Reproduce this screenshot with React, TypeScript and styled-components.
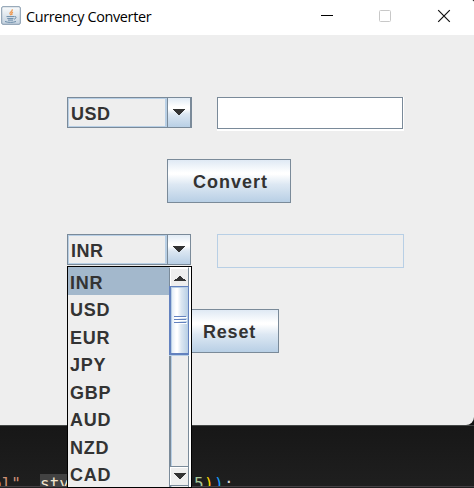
import React from 'react';
import styled, { createGlobalStyle } from 'styled-components';

const Global = createGlobalStyle`
  *, *::before, *::after { box-sizing: border-box; }
  body { margin: 0; background: #1a1a1a; overflow: hidden; }
`;

const Desktop = styled.div`
  width: 474px;
  height: 488px;
  position: relative;
  overflow: hidden;
  display: flex;
  flex-direction: column;
  background: #121212;
`;

const Frame = styled.main`
  height: 425px;
  flex: none;
  background: #eeeeee;
  border-radius: 0 3px 8px 0;
  overflow: hidden;
`;

const TitleBar = styled.header`
  height: 35px;
  background: #fff;
  display: flex;
  align-items: flex-start;
  padding: 6px 23px 0 1px;
`;

const Title = styled.h1`
  margin: 0 auto 0 5px;
  font: 400 14.4px/21px 'Open Sans', 'Noto Sans', sans-serif;
  letter-spacing: -0.33px;
  color: #000;
  white-space: nowrap;
`;

const Controls = styled.div`
  display: flex;
  gap: 46px;
  padding-top: 3px;
  svg { display: block; }
`;

const Content = styled.section`
  padding: 62px 70px 0 67px;
  display: flex;
  flex-direction: column;
`;

const FieldRow = styled.div`
  display: flex;
  align-items: flex-start;
  gap: 25px;
  height: 34px;
`;

const label = `
  font-family: 'Liberation Sans', Arial, sans-serif;
  font-weight: 700;
  font-size: 18px;
  color: #333;
`;

const Combo = styled.div<{ $w: number }>`
  width: ${(p) => p.$w}px;
  margin-right: ${(p) => 125 - p.$w}px;
  height: 31px;
  display: flex;
  border: 1px solid #7a8a99;
  border-right-width: ${(p) => (p.$w > 124 ? 2 : 1)}px;
`;

const ComboValue = styled.span`
  ${label}
  width: 99px;
  border: 1px solid #b8cfe5;
  border-right-width: 2px;
  padding-left: 2px;
  line-height: 31px;
  letter-spacing: 0.5px;
`;

const ComboArrow = styled.span`
  flex: 1;
  border-left: 1px solid #7a8a99;
  background: linear-gradient(#e1ebf5 0%, #fff 30%, #fff 38%, #dce7f2 55%, #b8cfe5 100%);
  display: flex;
  align-items: center;
  justify-content: center;
`;

const AmountInput = styled.div`
  width: 187px;
  height: 34px;
  background: #fff;
  padding-right: 1px;
  padding-bottom: 2px;
  &::before {
    content: '';
    display: block;
    height: 32px;
    border: 1px solid #7a8a99;
  }
`;

const ResultField = styled.div`
  width: 187px;
  height: 34px;
  border: 1px solid #b8cfe5;
`;

const Button = styled.button<{ $width: number; $left: number; $indent: number; $track: number }>`
  ${label}
  width: ${(p) => p.$width}px;
  height: 44px;
  margin: 0 0 0 ${(p) => p.$left}px;
  padding: 2px 0 0 ${(p) => p.$indent}px;
  text-align: left;
  letter-spacing: ${(p) => p.$track}px;
  border: 1px solid #7a8a99;
  border-radius: 0;
  background: linear-gradient(#dfe9f4 0%, #fff 30%, #fff 34%, #dde8f3 58%, #b8cfe5 100%);
`;

const Gap = styled.div<{ $h: number }>`
  flex: none;
  height: ${(p) => p.$h}px;
`;

const Popup = styled.div`
  position: absolute;
  left: 67px;
  top: 266px;
  width: 125px;
  height: 222px;
  border: 1px solid #000;
  background: #eee;
  display: flex;
`;

const Options = styled.ul`
  width: 101px;
  flex: none;
  margin: 0;
  padding: 0;
  list-style: none;
`;

const Option = styled.li<{ $selected: boolean }>`
  ${label}
  height: ${(p) => (p.$selected ? 28 : 27.5)}px;
  line-height: ${(p) => (p.$selected ? 32 : 31)}px;
  padding-left: 2px;
  letter-spacing: 0.7px;
  background: ${(p) => (p.$selected ? '#a3b8cc' : 'transparent')};
`;

const ScrollBar = styled.div`
  flex: 1;
  display: flex;
  flex-direction: column;
  padding-bottom: 1px;
  background: linear-gradient(90deg, #7a8a99 2px, #b8cfe5 2px 3px, #eee 3px 19px, #7a8a99 19px 20px, #fff 20px);
`;

const ScrollButton = styled.div<{ $down?: boolean }>`
  height: ${(p) => (p.$down ? 20 : 19)}px;
  width: 20px;
  flex: none;
  border: 1px solid #7a8a99;
  border-top-color: ${(p) => (p.$down ? '#7a8a99' : '#fff')};
  border-bottom-width: ${(p) => (p.$down ? 1 : 0)}px;
  background: #eee;
  box-shadow: inset 1px 1px #fff;
  display: flex;
  align-items: center;
  justify-content: center;
  padding-top: ${(p) => (p.$down ? 0 : 2)}px;
  padding-left: 1px;
`;

const Thumb = styled.div`
  height: 69px;
  width: 20px;
  flex: none;
  border: 1px solid #6382bf;
  border-left-width: 2px;
  border-bottom-width: 2px;
  box-shadow: inset 1px 1px #b8cfe5, 0 1px #b8cfe5;
  background: linear-gradient(90deg, #dce8f4 0, #fff 30%, #fff 38%, #dce7f2 60%, #b8cfe5 100%);
  display: flex;
  align-items: center;
  justify-content: center;
  padding-left: 1px;
`;

const Track = styled.div`
  flex: 1;
`;

const Editor = styled.footer`
  flex: 1;
  border-top: 1px solid #444746;
  background: linear-gradient(#171717, #1f1f1f);
  position: relative;
  overflow: hidden;
  &::after {
    content: '';
    position: absolute;
    left: 0;
    right: 0;
    bottom: 0;
    height: 2px;
    background: linear-gradient(#454145 50%, #202020 50%);
  }
`;

const CodeLine = styled.pre`
  margin: 0;
  padding-top: 48px;
  height: 63px;
  font: 16px/20px 'DejaVu Sans Mono', monospace;
  display: flex;
  white-space: pre;
`;

const Token = styled.span<{ $color: string; $w: number; $mark?: boolean; $shift?: number }>`
  color: ${(p) => p.$color};
  width: ${(p) => p.$w}px;
  background: ${(p) => (p.$mark ? 'linear-gradient(90deg, #424242 48px, transparent 48px)' : 'transparent')};
  text-indent: ${(p) => p.$shift ?? 0}px;
  flex: none;
`;

const Arrow = ({ up = false }: { up?: boolean }) => (
  <svg width="12" height={up ? 5 : 7} viewBox={up ? '0 0 12 5' : '0 0 12 7'} shapeRendering="crispEdges" fill="#333">
    {up ? <path d="M5 0h2v1h1v1h1v1h2v1h1v1H0V4h1V3h2V2h1V1h1z" /> : <path d="M0 0h12v1h-1v1h-1v1H9v1H8v1H7v1H5V5H4V4H3V3H2V2H1V1H0z" />}
  </svg>
);

const JavaIcon = () => (
  <svg width="20" height="20" viewBox="0 0 20 20" fill="none">
    <defs>
      <linearGradient id="tile" x2="0" y2="1">
        <stop stopColor="#f9fbfc" />
        <stop offset="1" stopColor="#c3d1df" />
      </linearGradient>
    </defs>
    <rect x=".7" y=".7" width="18.6" height="17.6" rx="1.3" fill="url(#tile)" stroke="#8297aa" />
    <path d="M11.2 3.2c1 2-3 2.8-2.2 4.6l1 1.4M12 6.2c-1.8.8-1.4 1.7-.8 2.8" stroke="#ee9a55" strokeWidth="1.3" />
    <path d="M5.5 10.6h7.5M6.2 12.6h6.3M7 14.1h5M4 15.5c3 1.2 8 1.2 11 0M13.4 10.5c2.6-.5 1.7 2.4-.3 2.7" stroke="#6b8ca8" strokeWidth="1" />
  </svg>
);

const currencies = ['INR', 'USD', 'EUR', 'JPY', 'GBP', 'AUD', 'NZD', 'CAD'];

export default function App() {
  return (
    <Desktop>
      <Global />
      <Frame>
        <TitleBar>
          <JavaIcon />
          <Title>Currency Converter</Title>
          <Controls>
            <svg width="12" height="14" viewBox="0 0 12 14"><path d="M0 6.5h12" stroke="#000" /></svg>
            <svg width="12" height="14" viewBox="0 0 12 14"><rect x=".5" y="1.5" width="11" height="11" rx="1" fill="none" stroke="#c8c8c8" /></svg>
            <svg width="14" height="14" viewBox="0 0 14 14"><path d="M1.2 1.2l11.6 11.6M12.8 1.2L1.2 12.8" stroke="#111" strokeWidth="1.2" /></svg>
          </Controls>
        </TitleBar>
        <Content>
          <FieldRow>
            <Combo $w={125}>
              <ComboValue>USD</ComboValue>
              <ComboArrow><Arrow /></ComboArrow>
            </Combo>
            <AmountInput />
          </FieldRow>
          <Gap $h={28} />
          <Button $width={124} $left={100} $indent={25} $track={1}>Convert</Button>
          <Gap $h={31} />
          <FieldRow>
            <Combo $w={124}>
              <ComboValue>INR</ComboValue>
              <ComboArrow><Arrow /></ComboArrow>
            </Combo>
            <ResultField />
          </FieldRow>
          <Gap $h={41} />
          <Button $width={100} $left={112} $indent={23} $track={0.8}>Reset</Button>
        </Content>
      </Frame>
      <Editor>
        <CodeLine>
          <Token $color="#ce9178" $w={40} $shift={-8}>ol"</Token>
          <Token $color="#f2e6d0" $w={153} $mark>style</Token>
          <Token $color="#a8c898" $w={11} $shift={1}>5</Token>
          <Token $color="#ffd700" $w={10}>)</Token>
          <Token $color="#179fff" $w={10}>)</Token>
          <Token $color="#d4d4d4" $w={10}>;</Token>
        </CodeLine>
      </Editor>
      <Popup>
        <Options>
          {currencies.map((c, i) => <Option key={c} $selected={i === 0}>{c}</Option>)}
        </Options>
        <ScrollBar>
          <ScrollButton><Arrow up /></ScrollButton>
          <Thumb>
            <svg width="13" height="8" viewBox="0 0 13 8" shapeRendering="crispEdges">
              <path d="M1 1.5h12M1 4.5h12M1 7.5h12" stroke="#fff" />
              <path d="M0 .5h12M0 3.5h12M0 6.5h12" stroke="#6382bf" />
            </svg>
          </Thumb>
          <Track />
          <ScrollButton $down><Arrow /></ScrollButton>
        </ScrollBar>
      </Popup>
    </Desktop>
  );
}
